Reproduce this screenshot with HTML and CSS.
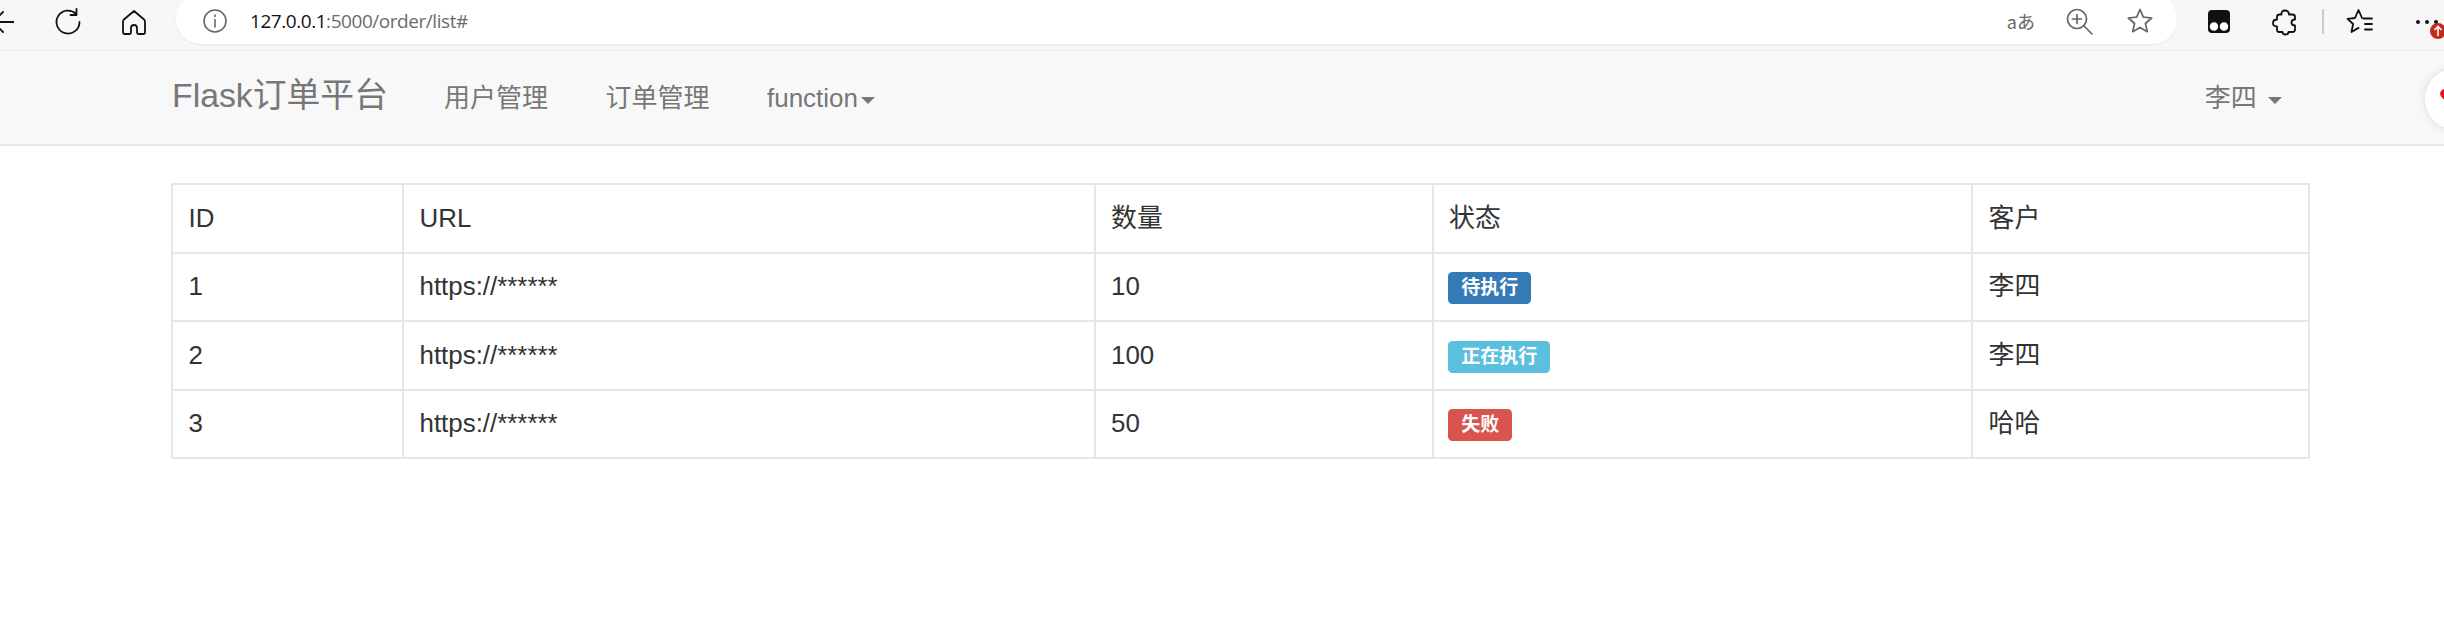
FILE: index.html
```html
<!DOCTYPE html>
<html lang="zh">
<head>
<meta charset="utf-8">
<title>Flask订单平台</title>
<link rel="stylesheet" href="styles.css">
</head>
<body>
<div class="toolbar">
  <svg class="ic back" viewBox="0 0 14 40"><path d="M14 20H-6M3 10-7 20 3 30"/></svg>
  <svg class="ic reload" viewBox="0 0 28 28"><path d="M25.5 14a11.5 11.5 0 1 1-3.4-8.1M22.5 1v6h-6"/></svg>
  <svg class="ic home" viewBox="0 0 28 28"><path d="M14 3 4.2 11.2Q3 12.300 3 14v10.500Q3 26 4.500 26h5Q11 26 11 24.500V20a3 3 0 0 1 6 0v4.500Q17 26 18.500 26h5Q25 26 25 24.500V14q0-1.700-1.200-2.800z"/></svg>
  <div class="omnibox">
    <svg class="ic info" viewBox="0 0 24 24"><circle cx="12" cy="12" r="11"/><path d="M12 10.500V18M12 6v1.500"/></svg>
    <span class="url"><span class="host">127.0.0.1</span>:5000/order/list#</span>
    <span class="translate">aあ</span>
    <svg class="ic grey lens" viewBox="0 0 28 28"><circle cx="12" cy="12" r="9.500"/><path d="M19 19l8 8M12 7.500v9M7.500 12h9"/></svg>
    <svg class="ic grey star" viewBox="0 0 28 28"><path d="M14 2.500l3.400 7.700 8.300.8-6.300 5.500 1.900 8.200L14 20.400l-7.300 4.300 1.900-8.200L2.300 11l8.300-.8z"/></svg>
  </div>
  <svg class="tamper" viewBox="0 0 28 28"><rect x="3" y="2" width="22" height="23" rx="4"/><circle cx="9" cy="18.500" r="5"/><circle cx="19" cy="18.500" r="5"/></svg>
  <svg class="ic puzzle" viewBox="0 0 28 28"><path d="M10.500 6.500Q10 2.500 14 2.500T18 6.500H21.500Q24 6.500 24 9V11.500Q20.500 11.500 20.500 14.500T24 17.500V21.500Q24 24 21.500 24H17.500Q17.500 26.500 14.500 26.500T11.500 24H8Q6 24 6 21.500V18.500Q2 18.500 2 15T6 11.500V9Q6 6.500 8.500 6.500z"/></svg>
  <span class="divider"></span>
  <svg class="ic fav" viewBox="0 0 28 28"><path d="M16 10l-3.500-8-3.500 8-7.500.8 5.600 5.200-1.600 8 7-4.100M17.500 10.500H26M19 16h7M19 21.500h7"/></svg>
  <span class="more"><i class="dot"></i><i class="dot"></i><i class="dot"></i>
    <span class="update"><svg viewBox="0 0 16 16"><path d="M8 13V4M4.500 7 8 3.500 11.500 7"/></svg></span>
  </span>
</div>

<nav class="navbar">
  <a class="brand" href="#">Flask订单平台</a>
  <a class="nav-link" href="#">用户管理</a>
  <a class="nav-link" href="#">订单管理</a>
  <a class="nav-link" href="#">function<span class="caret near"></span></a>
  <a class="nav-link user" href="#">李四<span class="caret far"></span></a>
</nav>

<main class="content">
  <table class="orders">
    <colgroup><col class="c-id"><col class="c-url"><col class="c-num"><col class="c-state"><col class="c-cust"></colgroup>
    <thead>
      <tr><th>ID</th><th>URL</th><th>数量</th><th>状态</th><th>客户</th></tr>
    </thead>
    <tbody>
      <tr><td>1</td><td>https://******</td><td>10</td><td><span class="label primary">待执行</span></td><td>李四</td></tr>
      <tr><td>2</td><td>https://******</td><td>100</td><td><span class="label info-l">正在执行</span></td><td>李四</td></tr>
      <tr><td>3</td><td>https://******</td><td>50</td><td><span class="label danger">失败</span></td><td>哈哈</td></tr>
    </tbody>
  </table>
</main>

<div class="float-widget">
  <svg viewBox="0 0 24 24"><path d="M12 21 2 10Q0 6 3 3.500T9 3l3 3 3-3q3-2 6 .5t1 6.500z"/></svg>
</div>
</body>
</html>
```
FILE: styles.css
```css
* { box-sizing: border-box; }
html, body { margin: 0; padding: 0; }
body {
  width: 2444px;
  height: 626px;
  overflow: hidden;
  position: relative;
  background: #fff;
  color: #333;
  font-family: "Liberation Sans", "Noto Sans CJK SC", sans-serif;
  font-size: 25.9px;
}

/* browser chrome */
.toolbar {
  display: flex;
  align-items: center;
  height: 51px;
  padding-bottom: 7px;
  background: #f7f7f7;
  border-bottom: 1px solid #e9e9e9;
  overflow: hidden;
}
.ic { fill: none; stroke: #111; stroke-width: 1.8; stroke-linecap: round; stroke-linejoin: round; flex: none; width: 28px; height: 28px; }
.ic.grey { stroke: #666; stroke-width: 1.7; }
.back { width: 14px; height: 40px; }
.reload { margin-left: 40px; }
.home { margin-left: 38px; }
.omnibox {
  display: flex;
  align-items: center;
  flex: none;
  width: 2001px;
  height: 50px;
  margin: -6px 0 0 28px;
  align-self: flex-start;
  padding: 4px 23px 0 27px;
  background: #fff;
  border-radius: 25px;
  box-shadow: 0 1px 3px rgba(0, 0, 0, .06);
}
.info { width: 24px; height: 24px; stroke: #666; stroke-width: 1.6; }
.url { margin-left: 23px; font: 19px "Open Sans", sans-serif; color: #6b6b6b; letter-spacing: -.45px; }
.host { color: #111; }
.translate { margin-left: auto; font: 18px "Noto Sans CJK JP", sans-serif; color: #666; }
.lens { margin-left: 30px; }
.star { margin-left: 33px; }
.tamper { flex: none; width: 28px; height: 28px; margin-left: 28px; fill: #111; }
.tamper circle { fill: #fff; stroke: #111; stroke-width: 1.4; }
.puzzle { margin-left: 38px; }
.divider { flex: none; width: 2px; height: 25px; margin-left: 23px; background: #ccc; }
.fav { margin-left: 22px; }
.more { position: relative; display: flex; gap: 5px; margin-left: 42px; flex: none; }
.dot { display: block; width: 4px; height: 4px; border-radius: 50%; background: #111; }
.update {
  position: absolute;
  left: 14px;
  top: 3px;
  width: 16px;
  height: 16px;
  border-radius: 50%;
  background: #c42b1c;
  display: flex;
}
.update svg { width: 16px; height: 16px; fill: none; stroke: #fff; stroke-width: 1.6; }

/* navbar */
.navbar {
  display: flex;
  align-items: baseline;
  height: 95px;
  padding: 17px 134.500px 0 172px;
  background: #f8f8f8;
  border-bottom: 2px solid #e7e7e7;
  color: #777;
}
.navbar a { color: #777; text-decoration: none; }
.brand { font-size: 33.800px; padding-right: 27.250px; }
.nav-link { padding: 0 28.750px; font-size: 26px; }
.user { margin-left: auto; padding-right: 27.750px; }
.caret {
  display: inline-block;
  width: 0;
  height: 0;
  border-top: 7.400px solid #777;
  border-left: 7.400px solid transparent;
  border-right: 7.400px solid transparent;
  vertical-align: middle;
}
.caret.near { margin-left: 3px; }
.caret.far { margin-left: 11px; }

/* table */
.content { padding: 37px 0 0 171px; }
.orders { width: 2136.500px; table-layout: fixed; border-collapse: collapse; }
.c-id { width: 231px; }
.c-url { width: 691.500px; }
.c-num { width: 338px; }
.c-state { width: 539.500px; }
.c-cust { width: 336.500px; }
.orders th, .orders td {
  height: 68.500px;
  padding: 0 15.500px;
  border: 2px solid #e6e6e6;
  font-weight: normal;
  text-align: left;
  vertical-align: middle;
  line-height: 37px;
}
.label {
  display: inline-block;
  padding: 0 13px;
  height: 32px;
  line-height: 31px;
  font-size: 19px;
  font-weight: bold;
  color: #fff;
  border-radius: 4.600px;
  margin-left: -.7px;
  vertical-align: middle;
}
.primary { background: #337ab7; }
.info-l { background: #5bc0de; }
.danger { background: #d9534f; }

/* floating page widget */
.float-widget {
  position: absolute;
  left: 2425px;
  top: 68px;
  width: 62px;
  height: 62px;
  border-radius: 50%;
  background: #fff;
  box-shadow: 0 0 8px rgba(0, 0, 0, .12);
}
.float-widget svg { position: absolute; left: 14px; top: 19px; width: 22px; height: 22px; fill: #e8141c; }
```
